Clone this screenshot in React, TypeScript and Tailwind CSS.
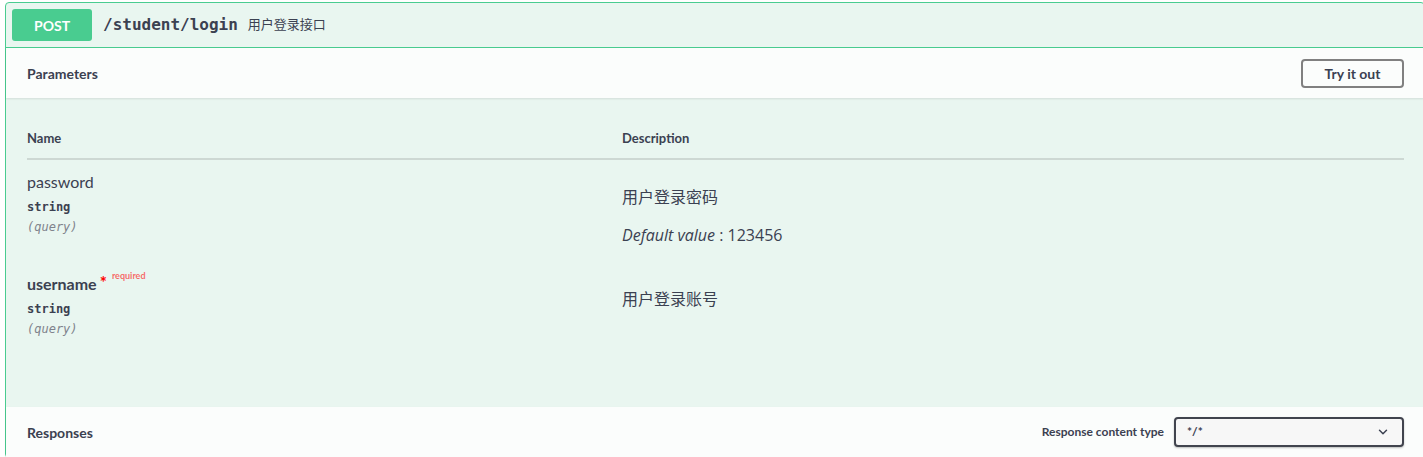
import { ChevronDown } from "lucide-react";

const title = "font-['Lato','Noto_Sans_CJK_SC',sans-serif]";
const body = "font-['Open_Sans','Noto_Sans_CJK_SC',sans-serif]";
const mono = "font-['DejaVu_Sans_Mono','Liberation_Mono',monospace]";

interface Param {
  name: string;
  type: string;
  location: string;
  required?: boolean;
  description: string;
  defaultValue?: string;
}

const params: Param[] = [
  { name: "password", type: "string", location: "(query)", description: "用户登录密码", defaultValue: "123456" },
  { name: "username", type: "string", location: "(query)", required: true, description: "用户登录账号" },
];

function ParamRow({ p }: { p: Param }) {
  return (
    <div className="flex pt-[11px] pb-[16px]">
      <div className="w-[595px] shrink-0">
        <div className={`${title} text-[16px] leading-[22px] flex items-start ${p.required ? "font-bold" : "font-normal"}`}>
          <span>{p.name}</span>
          {p.required && (
            <>
              <span className="text-[#ff0000] text-[17px] leading-[16px] font-bold ml-[3px] mt-[2px]">*</span>
              <span className="text-[rgba(255,0,0,0.6)] text-[9px] leading-[10px] font-bold ml-[5px] -mt-[2px]">
                required
              </span>
            </>
          )}
        </div>
        <div className={`${mono} text-[12px] font-semibold leading-[16px] mt-[6px]`}>{p.type}</div>
        <div className={`${mono} text-[12px] italic text-[#7f838c] leading-[16px] mt-[4px]`}>{p.location}</div>
      </div>
      <div className={`${body} text-[16px] leading-[22px] pt-[15px]`}>
        <p>{p.description}</p>
        {p.defaultValue && (
          <p className="mt-[16px]">
            <i>Default value</i> : {p.defaultValue}
          </p>
        )}
      </div>
    </div>
  );
}

export default function App() {
  return (
    <div className="w-[1423px] h-[457px] bg-white overflow-hidden text-[#3b4151]">
      <div className="ml-[5px] mt-[2px] w-[1420px] border border-[#49cc90] rounded-[4px] bg-[#e9f6f0]">
        {/* Summary */}
        <div className="flex items-center p-[6px] border-b border-[#49cc90]">
          <span
            className={`${title} w-[80px] h-[32px] flex items-center justify-center rounded-[3px] bg-[#49cc90] text-white text-[14px] font-bold`}
          >
            POST
          </span>
          <span className={`${mono} text-[16px] font-semibold ml-[11px]`}>/student/login</span>
          <span className={`${body} text-[13px] ml-[10px]`}>用户登录接口</span>
        </div>

        {/* Parameters header */}
        <div className="h-[50px] flex items-center justify-between px-[21px] bg-[#fbfdfc] shadow-[0_1px_2px_rgba(0,0,0,0.1)]">
          <h4 className={`${title} text-[14px] font-bold`}>Parameters</h4>
          <button
            className={`${title} w-[103px] h-[29px] -mr-[1px] rounded-[4px] border-2 border-[#808080] text-[14px] font-bold`}
          >
            Try it out
          </button>
        </div>

        {/* Parameter table */}
        <div className="h-[309px] px-[21px] pt-[21px] mr-[-1px]">
          <div className={`${title} flex text-[13px] font-bold h-[41px] items-end pb-[10px] border-b-2 border-[#cdd8d3]`}>
            <div className="w-[595px] shrink-0">Name</div>
            <div>Description</div>
          </div>
          {params.map((p) => (
            <ParamRow key={p.name} p={p} />
          ))}
        </div>

        {/* Responses header */}
        <div className="h-[50px] flex items-center justify-between px-[21px] bg-[#fbfdfc] shadow-[0_1px_2px_rgba(0,0,0,0.1)]">
          <h4 className={`${title} text-[14px] font-bold`}>Responses</h4>
          <div className="flex items-center gap-[10px] -mr-[1px]">
            <span className={`${title} text-[12px] font-bold`}>Response content type</span>
            <div className="w-[230px] h-[30px] flex items-center justify-between px-[11px] rounded-[4px] border-2 border-[#41444e] bg-[#f7f7f7] shadow-[0_1px_2px_rgba(0,0,0,0.25)]">
              <span className={`${title} text-[12px] font-bold`}>*/*</span>
              <ChevronDown size={14} strokeWidth={2.5} className="mr-[1px]" />
            </div>
          </div>
        </div>
      </div>
    </div>
  );
}
